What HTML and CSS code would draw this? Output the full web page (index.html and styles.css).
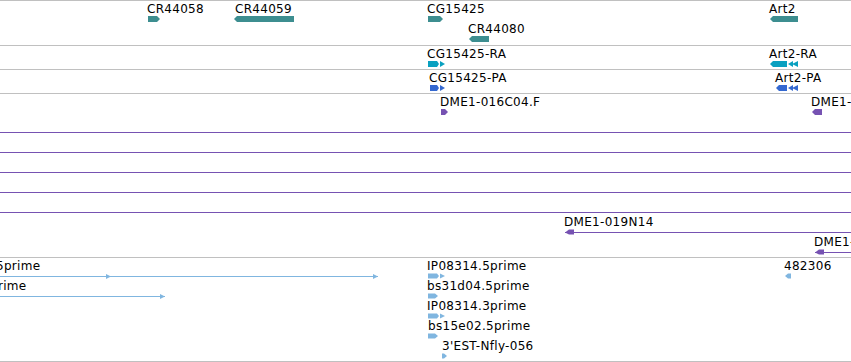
FILE: index.html
```html
<!DOCTYPE html>
<html>
	<head>
		<meta charset="UTF-8">
		<title></title>
		<link rel="stylesheet" href="styles.css">
	</head>
	<body>
		<div id="view"></div>
		<script type="text/javascript">
			//轨道数据：[样式, 行数, 颜色, 特征列表, 额外高度]
			//特征：[行, 标签x, 标签, 图形x, 宽度, 形状]
			var tracks = [
				['gene', 2, '#3d8e90', [
					[0, 147, 'CR44058', 148, 12, 'r'],
					[0, 235, 'CR44059', 234, 60, 'l'],
					[0, 427, 'CG15425', 428, 15, 'r'],
					[0, 769, 'Art2', 770, 28, 'l'],
					[1, 468, 'CR44080', 469, 20, 'l']
				], 1],
				['rna', 1, '#0aa0c0', [
					[0, 427, 'CG15425-RA', 428, 17, 'rt'],
					[0, 769, 'Art2-RA', 770, 28, 'lt']
				], 0],
				['rna', 1, '#3468d0', [
					[0, 429, 'CG15425-PA', 430, 15, 'rt'],
					[0, 775, 'Art2-PA', 776, 22, 'lt']
				], 0],
				['est', 8, '#7652b2', [
					[0, 440, 'DME1-016C04.F', 441, 7, 'r'],
					[0, 811, 'DME1-', 812, 10, 'l'],
					[1, 0, '', 0, 851, 'line'],
					[2, 0, '', 0, 851, 'line'],
					[3, 0, '', 0, 851, 'line'],
					[4, 0, '', 0, 851, 'line'],
					[5, 0, '', 0, 851, 'line'],
					[6, 564, 'DME1-019N14', 565, 290, 'lline'],
					[7, 814, 'DME1-', 815, 40, 'lline']
				], 0],
				['cdna', 5, '#80b6e0', [
					[0, -4, '5prime', 0, 378, 'rline', 110],
					[1, -2, 'rime', 0, 165, 'rline'],
					[0, 427, 'IP08314.5prime', 428, 17, 'rt'],
					[1, 427, 'bs31d04.5prime', 428, 10, 'r'],
					[2, 427, 'IP08314.3prime', 428, 17, 'rt'],
					[3, 428, 'bs15e02.5prime', 428, 10, 'r'],
					[4, 442, "3'EST-Nfly-056", 442, 5, 'r'],
					[0, 784, '482306', 785, 6, 'l']
				], 0]
			];

			//画图形。
			function glyph(f, hh, color){
				var x = f[3], w = f[4], s = f[5], cy = f[0]*20+18, t = cy-hh, b = cy+hh;
				var p = function(pts){ return '<polygon points="'+pts.join(' ')+'"/>'; };
				if(s=='r') return p([x+','+t, (x+w-3)+','+t, (x+w)+','+cy, (x+w-3)+','+b, x+','+b]);
				if(s=='l') return p([(x+3)+','+t, (x+w)+','+t, (x+w)+','+b, (x+3)+','+b, x+','+cy]);
				if(s=='rt'){
					var e = x+w-6;
					return p([x+','+t, (e-2)+','+t, e+','+cy, (e-2)+','+b, x+','+b])
						+ p([(e+1)+','+t, (x+w)+','+cy, (e+1)+','+b]);
				}
				if(s=='lt'){
					var e = x+w-11;
					return p([(x+3)+','+t, e+','+t, e+','+b, (x+3)+','+b, x+','+cy])
						+ p([(e+1)+','+cy, (e+6)+','+t, (e+6)+','+b])
						+ p([(e+5)+','+cy, (x+w)+','+t, (x+w)+','+b]);
				}
				//长线条。
				var y = cy+0.5;
				var str = '<line class="wire" stroke="'+color+'" x1="'+x+'" y1="'+y+'" x2="'+(x+w)+'" y2="'+y+'"/>';
				if(s=='lline'){
					str += p([x+','+y, (x+4)+','+(y-3), (x+9)+','+(y-3), (x+9)+','+(y+2), (x+4)+','+(y+2)]);
				}
				if(s=='rline'){
					str += p([(x+w-5)+','+(y-2.5), (x+w)+','+y, (x+w-5)+','+(y+2.5)]);
					if(f[6]) str += p([(f[6]-4)+','+(y-2.5), (f[6]+1)+','+y, (f[6]-4)+','+(y+2.5)]);
				}
				return str;
			}

			var view = document.getElementById('view');
			var html = '';
			for(var i=0;i<tracks.length;i++){
				var tr = tracks[i];
				var h = tr[1]*20+3+tr[4];
				var hh = tr[0]=='cdna' ? 2.5 : 3;
				var svg = '<svg width="851" height="'+h+'" fill="'+tr[2]+'">';
				var labels = '';
				for(var j=0;j<tr[3].length;j++){
					var f = tr[3][j];
					svg += glyph(f, hh, tr[2]);
					if(f[2]) labels += '<span class="label" style="left:'+f[1]+'px;top:'+(f[0]*20+2)+'px;">'+f[2]+'</span>';
				}
				svg += '</svg>';
				html += '<div class="track '+tr[0]+'" style="height:'+h+'px;">'+svg+labels+'</div>';
			}
			view.innerHTML = html;
		</script>
	</body>
</html>
```

FILE: styles.css
```css
body{
	margin: 0;
	font-family: "DejaVu Sans", "Liberation Sans", sans-serif;
	font-size: 12px;
	color: #000;
	background: #fff;
}
#view{
	width: 851px;
	overflow: hidden;
	border-bottom: 1px solid #c0c0c0;
}
.track{
	position: relative;
	overflow: hidden;
	border-top: 1px solid #c0c0c0;
}
.track svg{
	position: absolute;
	left: 0;
	top: 0;
	display: block;
}
.wire{
	stroke-width: 1;
	shape-rendering: crispEdges;
}
.label{
	position: absolute;
	line-height: 12px;
	letter-spacing: 0.3px;
	white-space: nowrap;
}
```
